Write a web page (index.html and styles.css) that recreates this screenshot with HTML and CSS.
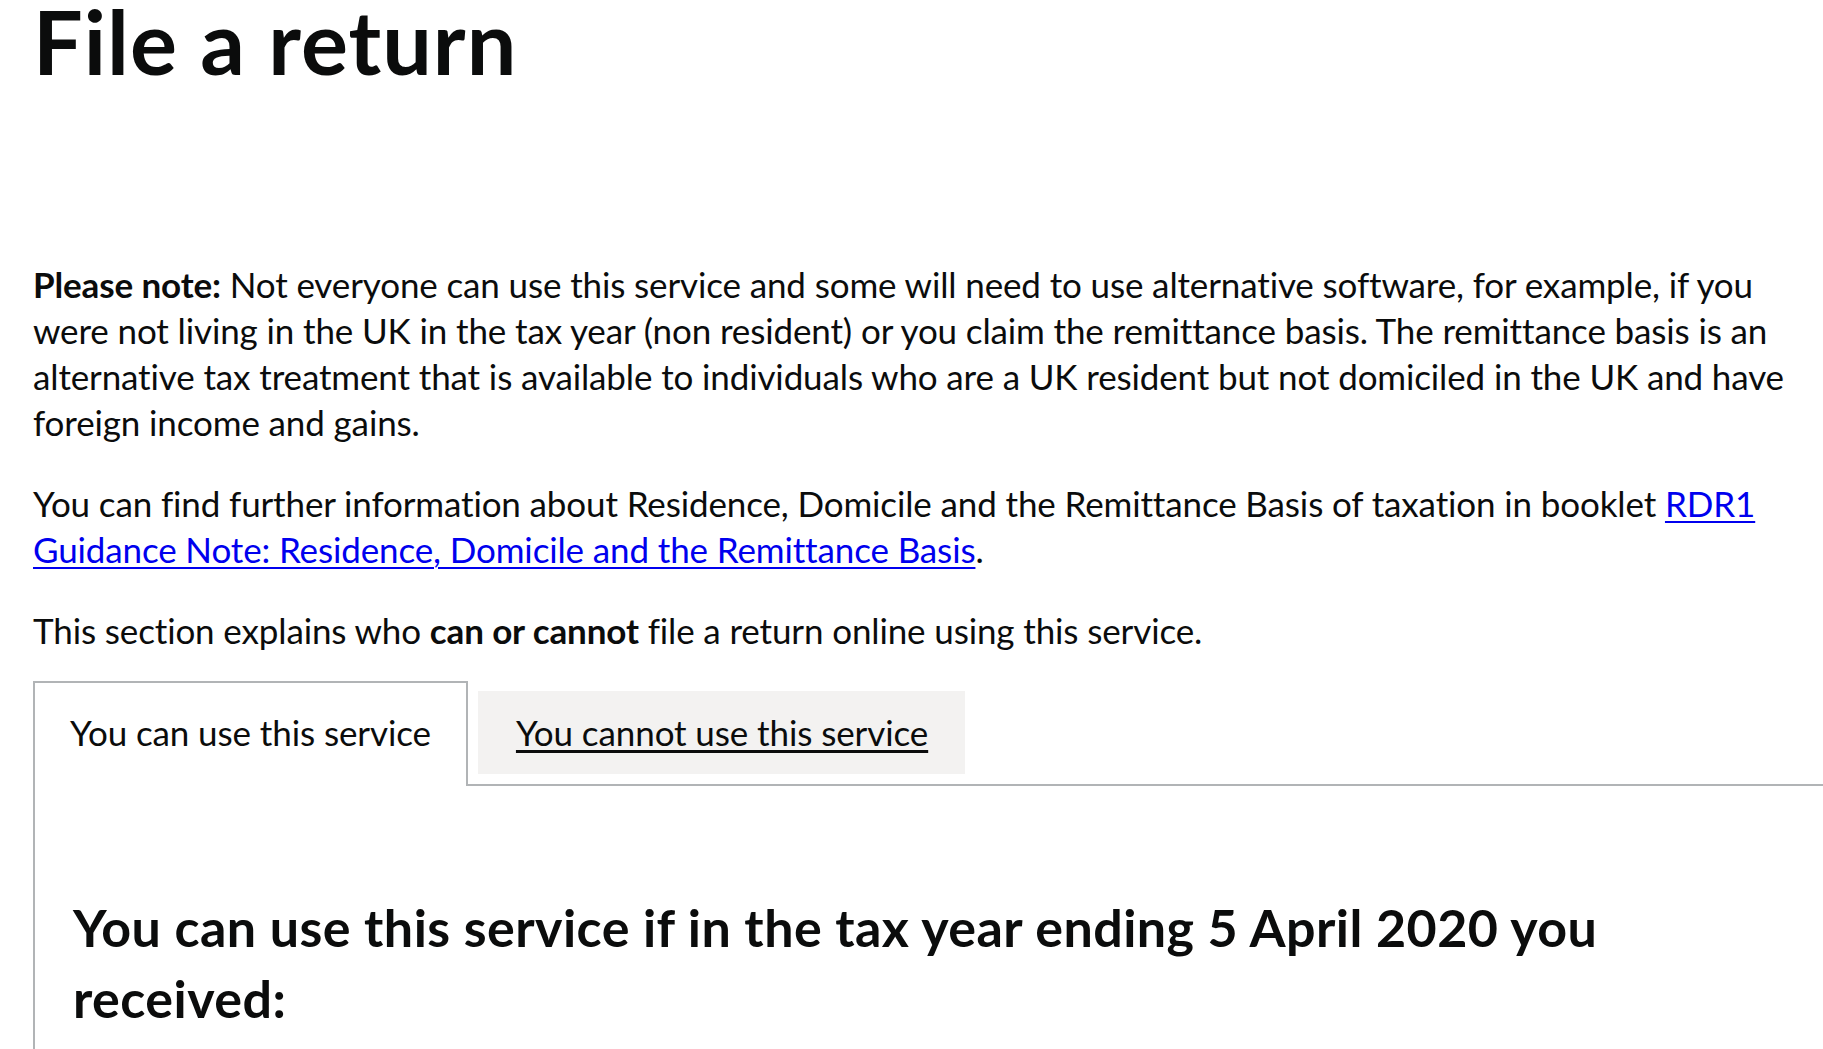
FILE: index.html
```html
<!DOCTYPE html>
<html lang="en">
<head>
<meta charset="utf-8">
<title>File a return</title>
<link rel="stylesheet" href="styles.css">
</head>
<body>
<main class="page">
  <h1 class="title">File a return</h1>
  <p class="body"><strong>Please note:</strong> Not everyone can use this service and some will need to use alternative software, for example, if you were not living in the UK in the tax year (non resident) or you claim the remittance basis. The remittance basis is an alternative tax treatment that is available to individuals who are a UK resident but not domiciled in the UK and have foreign income and gains.</p>
  <p class="body">You can find further information about Residence, Domicile and the Remittance Basis of taxation in booklet <a class="link" href="#">RDR1 Guidance Note: Residence, Domicile and the Remittance Basis</a>.</p>
  <p class="body body-last">This section explains who <strong>can or cannot</strong> file a return online using this service.</p>
  <section class="tabs">
    <ul class="tabs-list">
      <li class="tab tab-active"><span class="tab-label">You can use this service</span></li>
      <li class="tab tab-inactive"><a class="tab-link" href="#">You cannot use this service</a></li>
    </ul>
    <div class="panel">
      <h2 class="panel-heading">You can use this service if in the tax year ending 5 April 2020 you received:</h2>
    </div>
  </section>
</main>
</body>
</html>
```
FILE: styles.css
```css
html, body {
  margin: 0;
  padding: 0;
  background: #ffffff;
  overflow: hidden;
}
body {
  font-family: Lato, "Liberation Sans", sans-serif;
  color: #0b0c0c;
  font-variant-ligatures: none;
}
.page {
  padding: 0 10px 0 33px;
}
.title {
  margin: 0 0 179px 0;
  font-size: 88px;
  line-height: 82px;
  font-weight: 700;
  letter-spacing: 1px;
}
.body {
  margin: 0 0 35px 0;
  font-size: 35px;
  line-height: 46px;
  letter-spacing: -0.13px;
}
.body-last {
  margin-bottom: 28px;
}
.body strong {
  font-weight: 700;
}
.link {
  color: #0000ee;
  text-decoration: underline;
  text-decoration-thickness: 2px;
  text-underline-offset: 4px;
}
.tabs {
  margin: 0 -40px 0 0;
}
.tabs-list {
  list-style: none;
  margin: 0;
  padding: 0;
  display: flex;
  align-items: flex-start;
  border-bottom: 2px solid #b1b4b6;
  height: 103px;
}
.tab {
  font-size: 35px;
  line-height: 46px;
  letter-spacing: -0.1px;
}
.tab-active {
  background: #ffffff;
  border: 2px solid #b1b4b6;
  border-bottom: 0;
  padding: 26px 35px 0 35px;
  height: 77px;
  position: relative;
  z-index: 1;
}
.tab-inactive {
  background: #f3f2f1;
  margin: 10px 0 0 10px;
  padding: 18px 37px 19px 38px;
}
.tab-link {
  color: #0b0c0c;
  text-decoration: underline;
  text-decoration-thickness: 3px;
  text-underline-offset: 4px;
}
.panel {
  border-left: 2px solid #b1b4b6;
  padding: 106px 38px 40px 38px;
  min-height: 400px;
}
.panel-heading {
  margin: 0;
  font-size: 52px;
  line-height: 71px;
  font-weight: 700;
  letter-spacing: 0.45px;
  max-width: 1700px;
}
```
